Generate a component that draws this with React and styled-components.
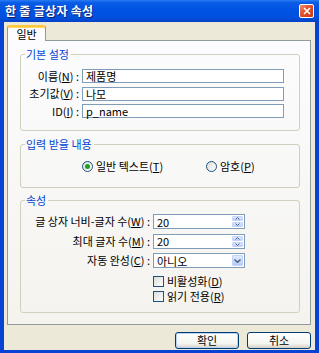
import React from 'react';
import styled, { createGlobalStyle } from 'styled-components';

const Global = createGlobalStyle`
  html, body { margin: 0; padding: 0; background: #fff; }
  body { font-family: "Noto Sans CJK KR", "Noto Sans", sans-serif; }
`;

const Window = styled.div`
  width: 319px;
  height: 353px;
  display: flex;
  flex-direction: column;
  background: #0842d4;
  box-sizing: border-box;
`;

const TitleBar = styled.div`
  height: 22px;
  flex: none;
  display: flex;
  align-items: center;
  justify-content: space-between;
  padding: 0 5px 0 5px;
  background: linear-gradient(#2a7cf6 0%, #0a5ce6 12%, #0054e3 45%, #0050dc 80%, #0341c9 100%);
`;

const Title = styled.span`
  color: #fff;
  font-size: 12px;
  font-weight: bold;
  line-height: 14px;
  letter-spacing: 0.3px;
  text-shadow: 1px 1px 0 #0a1f76;
`;

const CloseButton = styled.div`
  width: 13px;
  height: 12px;
  border: 1px solid #fff;
  border-radius: 2px;
  background: linear-gradient(135deg, #f08d6e 0%, #e0502a 45%, #c93c15 100%);
  display: flex;
  align-items: center;
  justify-content: center;
`;

const Body = styled.div`
  flex: 1;
  margin: 0 4px 3px 4px;
  padding: 3px 4px 1px 3px;
  background: #ece9d8;
  display: flex;
  flex-direction: column;
`;

const TabStrip = styled.div`
  display: flex;
  height: 16px;
  position: relative;
  z-index: 1;
  margin-bottom: -1px;
`;

const Tab = styled.div`
  width: 37px;
  height: 14px;
  border: 1px solid #919b9c;
  border-bottom: none;
  border-top: 2px solid #ffc83c;
  box-shadow: inset 0 1px 0 #ffd868;
  border-radius: 3px 3px 0 0;
  background: #fcfcfe;
  font-size: 11px;
  line-height: 14px;
  text-align: center;
  color: #000;
`;

const Panel = styled.div`
  height: 285px;
  box-sizing: border-box;
  border: 1px solid #919b9c;
  background: linear-gradient(#fcfcfe, #f4f3ee);
  padding: 7px 10px 0 12px;
  display: flex;
  flex-direction: column;
`;

const Group = styled.fieldset`
  margin: 0;
  margin-top: ${p => p.$gap || 0}px;
  padding: 0;
  height: ${p => p.$h}px;
  box-sizing: border-box;
  border: 1px solid #d0d0bf;
  border-radius: 3px;
  min-width: 0;
`;

const Legend = styled.legend`
  margin-left: 4px;
  padding: 0 2px 0 1px;
  font-size: 11px;
  line-height: 13px;
  color: #0046d5;
`;

const FormGrid = styled.div`
  display: grid;
  grid-template-columns: ${p => p.$label}px ${p => p.$field}px;
  column-gap: 3px;
  row-gap: ${p => p.$rowGap}px;
  padding-top: ${p => p.$top}px;
  align-items: center;
`;

const Label = styled.span`
  text-align: right;
  font-size: 11px;
  line-height: 13px;
  color: #000;
  white-space: nowrap;
`;

const TextBox = styled.div`
  height: ${p => p.$h || 14}px;
  box-sizing: border-box;
  border: 1px solid #7f9db9;
  background: #fff;
  font-size: 11px;
  line-height: 12px;
  padding-left: 3px;
  color: #000;
  display: flex;
  align-items: center;
  position: relative;
`;

const SpinButtons = styled.div`
  position: absolute;
  right: 1px;
  top: 1px;
  bottom: 1px;
  width: 11px;
  display: flex;
  flex-direction: column;
  gap: 1px;
`;

const SpinHalf = styled.div`
  flex: 1;
  border-radius: 1px;
  background: linear-gradient(#e3ebfd, #bccefa);
  border: 1px solid #c2d3fc;
  box-sizing: border-box;
  display: flex;
  align-items: center;
  justify-content: center;
`;

const DropButton = styled.div`
  position: absolute;
  right: 1px;
  top: 1px;
  bottom: 1px;
  width: 11px;
  border-radius: 1px;
  background: linear-gradient(#e3ebfd, #b6c9f8);
  border: 1px solid #c2d3fc;
  box-sizing: border-box;
  display: flex;
  align-items: center;
  justify-content: center;
`;

const RadioRow = styled.div`
  display: flex;
  padding: 9px 0 0 61px;
`;

const Option = styled.label`
  width: ${p => (p.$w ? `${p.$w}px` : 'auto')};
  display: flex;
  align-items: center;
  gap: 3px;
  font-size: 11px;
  line-height: 13px;
  color: #000;
  white-space: nowrap;
`;

const RadioDot = styled.span`
  width: 11px;
  height: 11px;
  box-sizing: border-box;
  border-radius: 50%;
  border: 1px solid #1c5180;
  background: linear-gradient(135deg, #dcdcd7, #ffffff);
  display: flex;
  align-items: center;
  justify-content: center;
  &::after {
    content: '';
    width: 5px;
    height: 5px;
    border-radius: 50%;
    background: ${p => (p.$on ? '#21a121' : 'transparent')};
  }
`;

const CheckList = styled.div`
  grid-column: 2;
  display: flex;
  flex-direction: column;
  gap: 2px;
  margin-top: 2px;
`;

const CheckBox = styled.span`
  width: 11px;
  height: 11px;
  box-sizing: border-box;
  border: 1px solid #1c5180;
  background: linear-gradient(135deg, #dcdcd7, #ffffff);
`;

const ButtonRow = styled.div`
  display: flex;
  justify-content: flex-end;
  gap: 8px;
  margin-top: 7px;
`;

const Button = styled.div`
  width: 64px;
  height: 17px;
  box-sizing: border-box;
  border: 1px solid #003c74;
  border-radius: 3px;
  background: linear-gradient(#ffffff, #f4f4f0 70%, #d6d0c5);
  box-shadow: ${p => (p.$default ? 'inset 0 0 0 1px #b8d2f7' : 'none')};
  font-size: 11px;
  line-height: 15px;
  text-align: center;
  color: #000;
`;

const Up = () => (
  <svg width="5" height="3" viewBox="0 0 5 3"><path d="M0.5 2.5L2.5 0.5L4.5 2.5" fill="none" stroke="#4d6185" strokeWidth="1" /></svg>
);
const Down = () => (
  <svg width="5" height="3" viewBox="0 0 5 3"><path d="M0.5 0.5L2.5 2.5L4.5 0.5" fill="none" stroke="#4d6185" strokeWidth="1" /></svg>
);
const Chevron = () => (
  <svg width="7" height="4" viewBox="0 0 7 4"><path d="M0.5 0.5L3.5 3.3L6.5 0.5" fill="none" stroke="#4d6185" strokeWidth="1.4" /></svg>
);

export default function App() {
  return (
    <Window>
      <Global />
      <TitleBar>
        <Title>한 줄 글상자 속성</Title>
        <CloseButton>
          <svg width="8" height="8" viewBox="0 0 8 8">
            <path d="M1 1L7 7M7 1L1 7" stroke="#fff" strokeWidth="1.6" />
          </svg>
        </CloseButton>
      </TitleBar>
      <Body>
        <TabStrip>
          <Tab>일반</Tab>
        </TabStrip>
        <Panel>
          <Group $h={83}>
            <Legend>기본 설정</Legend>
            <FormGrid $label={58} $field={202} $rowGap={3.5} $top={8}>
              <Label>이름(<u>N</u>) :</Label>
              <TextBox>제품명</TextBox>
              <Label>초기값(<u>V</u>) :</Label>
              <TextBox>나모</TextBox>
              <Label>ID(<u>I</u>) :</Label>
              <TextBox>p_name</TextBox>
            </FormGrid>
          </Group>
          <Group $h={50} $gap={7}>
            <Legend>입력 받을 내용</Legend>
            <RadioRow>
              <Option $w={124}><RadioDot $on /><span>일반 텍스트(<u>T</u>)</span></Option>
              <Option $w={70}><RadioDot /><span>암호(<u>P</u>)</span></Option>
            </RadioRow>
          </Group>
          <Group $h={119} $gap={6}>
            <Legend>속성</Legend>
            <FormGrid $label={129} $field={92} $rowGap={4.5} $top={7}>
              <Label>글 상자 너비-글자 수(<u>W</u>) :</Label>
              <TextBox $h={15}>20<SpinButtons><SpinHalf><Up /></SpinHalf><SpinHalf><Down /></SpinHalf></SpinButtons></TextBox>
              <Label>최대 글자 수(<u>M</u>) :</Label>
              <TextBox $h={15}>20<SpinButtons><SpinHalf><Up /></SpinHalf><SpinHalf><Down /></SpinHalf></SpinButtons></TextBox>
              <Label>자동 완성(<u>C</u>) :</Label>
              <TextBox $h={15}>아니오<DropButton><Chevron /></DropButton></TextBox>
              <CheckList>
                <Option><CheckBox /><span>비활성화(<u>D</u>)</span></Option>
                <Option><CheckBox /><span>읽기 전용(<u>R</u>)</span></Option>
              </CheckList>
            </FormGrid>
          </Group>
        </Panel>
        <ButtonRow>
          <Button $default>확인</Button>
          <Button>취소</Button>
        </ButtonRow>
      </Body>
    </Window>
  );
}
